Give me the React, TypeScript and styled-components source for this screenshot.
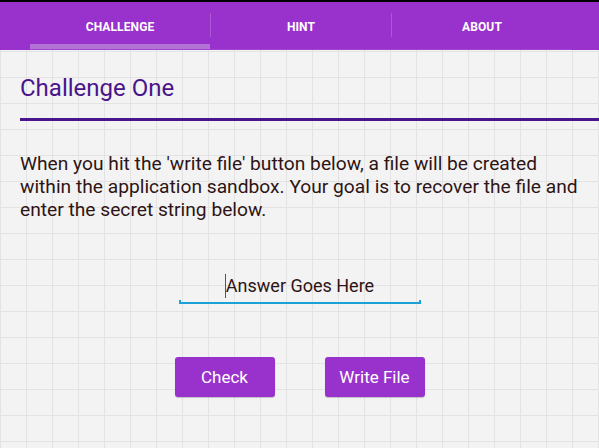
import React, {FC} from 'react';
import styled, {createGlobalStyle} from 'styled-components';

const GlobalStyle = createGlobalStyle`
  html, body {
    margin: 0;
    padding: 0;
  }
  body {
    min-height: 448px;
    font-family: Roboto, 'Noto Sans', 'Liberation Sans', sans-serif;
    background-color: #f3f3f3;
    background-image:
      linear-gradient(to right, #e3e3e3 1px, transparent 1px),
      linear-gradient(to bottom, #e3e3e3 1px, transparent 1px);
    background-size: 26px 26px;
    background-position: 0 25px;
  }
`;

const tabs = ['Challenge', 'Hint', 'About'];

export const App: FC = () => (
  <>
    <GlobalStyle />
    <StatusStrip />
    <Header>
      <TabRow>
        {tabs.map((tab, i) => (
          <React.Fragment key={tab}>
            {i > 0 && <Divider />}
            <Tab active={i === 0}>{tab}</Tab>
          </React.Fragment>
        ))}
      </TabRow>
    </Header>
    <Content>
      <Title>Challenge One</Title>
      <Rule />
      <Description>
        When you hit the 'write file' button below, a file will be created within the application sandbox. Your
        goal is to recover the file and enter the secret string below.
      </Description>
      <FieldRow>
        <Field>
          <Caret />
          Answer Goes Here
        </Field>
      </FieldRow>
      <ButtonRow>
        <Button>Check</Button>
        <Button>Write File</Button>
      </ButtonRow>
    </Content>
  </>
);

export default App;

const StatusStrip = styled.div`
  height: 2px;
  background: #000;
`;

const Header = styled.header`
  height: 48px;
  background: #9932cc;
  display: flex;
  padding: 0 27px 0 30px;
`;

const TabRow = styled.nav`
  flex: 1;
  display: flex;
  align-items: center;
  border-bottom: 1px solid rgba(255, 255, 255, 0.08);
  height: 47px;
`;

const Tab = styled.div<{active?: boolean}>`
  flex: 1;
  height: 100%;
  box-sizing: border-box;
  display: flex;
  align-items: center;
  justify-content: center;
  padding-top: 8px;
  border-bottom: 5px solid ${(props) => (props.active ? '#b274d4' : 'transparent')};
  color: #fff;
  font-size: 12px;
  font-weight: 700;
  letter-spacing: 0.1px;
  text-transform: uppercase;
`;

const Divider = styled.div`
  width: 1px;
  height: 24px;
  margin-bottom: 2px;
  background: rgba(255, 255, 255, 0.18);
`;

const Content = styled.main`
  padding-left: 20px;
`;

const Title = styled.h1`
  margin: 24px 0 0;
  font-size: 24px;
  line-height: 28px;
  font-weight: 400;
  color: #4a148c;
`;

const Rule = styled.div`
  height: 3px;
  margin-top: 16px;
  background: #4a148c;
`;

const Description = styled.p`
  margin: 31px 20px 0 0;
  font-size: 19.2px;
  line-height: 23px;
  color: #2e1414;
`;

const FieldRow = styled.div`
  display: flex;
  justify-content: center;
  margin: 53px 20px 0 0;
`;

const Field = styled.div`
  position: relative;
  width: 242px;
  height: 24px;
  padding-bottom: 4px;
  display: flex;
  align-items: center;
  justify-content: center;
  font-size: 18px;
  line-height: 24px;
  color: #2e1414;
  border-bottom: 2px solid #1ba1d6;

  &::before,
  &::after {
    content: '';
    position: absolute;
    bottom: -2px;
    width: 2px;
    height: 4px;
    background: #1ba1d6;
  }
  &::before {
    left: 0;
  }
  &::after {
    right: 0;
  }
`;

const Caret = styled.span`
  width: 1px;
  height: 24px;
  background: #555;
`;

const ButtonRow = styled.div`
  display: flex;
  justify-content: center;
  gap: 50px;
  margin: 53px 20px 0 0;
`;

const Button = styled.button`
  width: 100px;
  height: 40px;
  border: none;
  border-radius: 3px;
  background: #9932cc;
  box-shadow: 0 1px 1px rgba(0, 0, 0, 0.2);
  color: #fff;
  font-family: inherit;
  font-size: 17px;
  padding: 0;
`;
